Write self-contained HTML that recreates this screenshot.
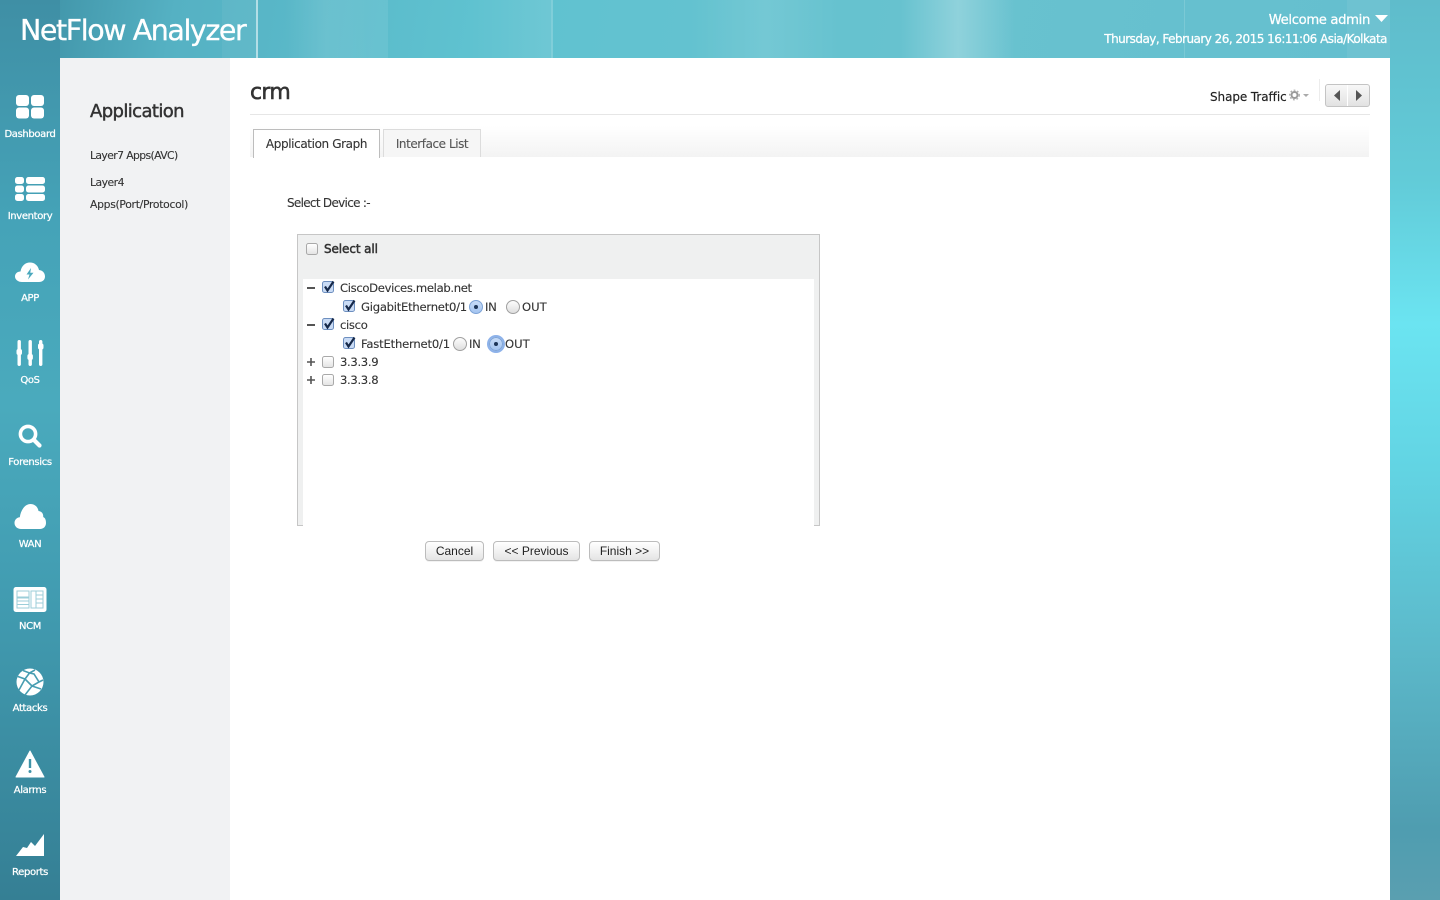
<!DOCTYPE html>
<html><head><meta charset="utf-8"><title>NetFlow Analyzer</title>
<style>
html,body{margin:0;padding:0;width:1440px;height:900px;overflow:hidden}
body{position:relative;font-family:"DejaVu Sans","Liberation Sans",sans-serif;color:#333;background:#4fa9bb}
.a{position:absolute;white-space:nowrap}
#bg{position:absolute;inset:0;background:linear-gradient(100deg,#3a8ba0 0,#55b1c3 11%,#5fc2d0 30%,#68c2cf 60%,#65bfcf 85%,#62bccd 100%)}
#bgb{position:absolute;left:0;top:0;width:60px;height:900px;background:linear-gradient(180deg,#3f8fa5 0,#45a3b8 25%,#4aaabd 45%,#429db2 65%,#357f94 100%)}
#bgr{position:absolute;left:1390px;top:0;width:50px;height:900px;background:linear-gradient(180deg,#5fbccb 0,#62cbd8 20%,#6be4f1 36%,#62d4e3 52%,#5cb9ca 72%,#4f9db0 92%,#5a9fb0 100%)}
.st{position:absolute;top:0;height:58px}
.nav{position:absolute;left:0;width:60px;text-align:center;color:#fff;font-size:10px;letter-spacing:-.35px;font-weight:400;-webkit-text-stroke:.25px #fff}
.nav svg{position:absolute;left:10px;top:0}
.nav span{position:absolute;left:0;width:60px;top:37px;line-height:12px}
.t{font-size:11.6px;letter-spacing:-.33px;color:#333;line-height:14px;-webkit-text-stroke:.12px #333}
.cb{position:absolute;width:10px;height:10px;border:1px solid #a9a9a9;border-radius:2.5px;background:linear-gradient(#fff,#e4e4e4)}
.ck{position:absolute;width:13px;height:13px}
.ck svg{position:absolute;left:0;top:0;overflow:visible}
.r{position:absolute;width:14px;height:14px;border:1px solid #a0a0a0;border-radius:50%;background:linear-gradient(#fdfdfd,#dedede);box-sizing:border-box}
.ron{background:linear-gradient(#c8dcf7,#a3c4f0);border-color:#7da3d6}
.ron:after{content:"";position:absolute;left:4px;top:4px;width:4px;height:4px;border-radius:50%;background:#1d3557}
.btn{position:absolute;top:541px;height:20px;box-sizing:border-box;border:1px solid #bcbcbc;border-radius:4px;background:linear-gradient(#fff,#f2f2f2 50%,#e4e4e4);font:12px/18px "Liberation Sans",sans-serif;color:#222;text-align:center;box-shadow:0 1px 0 rgba(0,0,0,.05)}
</style></head><body>
<div id="bg"></div><div id="bgb"></div><div id="bgr"></div>
<div class="st" style="left:222px;width:34px;background:rgba(255,255,255,.05)"></div>
<div class="st" style="left:256px;width:2px;background:rgba(255,255,255,.55)"></div>
<div class="st" style="left:285px;width:103px;background:linear-gradient(90deg,rgba(255,255,255,0),rgba(255,255,255,.1) 40%,rgba(255,255,255,.07))"></div>
<div class="st" style="left:470px;width:81px;background:linear-gradient(90deg,rgba(255,255,255,0),rgba(255,255,255,.09))"></div>
<div class="st" style="left:551px;width:2px;background:rgba(255,255,255,.2)"></div>
<div class="st" style="left:690px;width:150px;background:linear-gradient(90deg,rgba(255,255,255,0),rgba(255,255,255,.1),rgba(255,255,255,0))"></div>
<div class="st" style="left:900px;width:116px;background:linear-gradient(90deg,rgba(255,255,255,0),rgba(255,255,255,.26),rgba(255,255,255,0))"></div>
<div class="st" style="left:1184px;width:1px;background:rgba(255,255,255,.14)"></div>
<div class="st" style="left:1347px;width:43px;background:rgba(255,255,255,.06)"></div>

<div class="a" style="left:20px;top:11px;font:28.5px/40px 'DejaVu Sans',sans-serif;letter-spacing:-1.43px;color:#fff;-webkit-text-stroke:.3px #fff">NetFlow Analyzer</div>
<div class="a" style="right:70px;top:12px;font-size:13.2px;line-height:17px;letter-spacing:-.35px;color:#fff;-webkit-text-stroke:.25px #fff">Welcome admin</div>
<svg class="a" style="left:1375px;top:15px" width="13" height="8"><path d="M0 0H13L6.500 7Z" fill="#fff"/></svg>
<div class="a" style="right:53px;top:31px;font-size:12px;line-height:16px;letter-spacing:-.53px;color:#fff;-webkit-text-stroke:.25px #fff">Thursday, February 26, 2015 16:11:06 Asia/Kolkata</div>

<!-- panels -->
<div class="a" style="left:60px;top:58px;width:170px;height:842px;background:#f1f2f3"></div>
<div class="a" style="left:230px;top:58px;width:1160px;height:842px;background:#fff"></div>

<!-- nav -->
<div class="nav" style="top:92px;height:50px"><svg width="40" height="30" fill="#fff"><rect x="6" y="3" width="13" height="11" rx="3"/><rect x="21" y="3" width="13" height="11" rx="3"/><rect x="6" y="15.500" width="13" height="11" rx="3"/><rect x="21" y="15.500" width="13" height="11" rx="3"/></svg><span>Dashboard</span></div>
<div class="nav" style="top:174px;height:50px"><svg width="40" height="30" fill="#fff"><rect x="5" y="3" width="9" height="7" rx="2.500"/><rect x="16" y="3" width="19" height="7" rx="2.500"/><rect x="5" y="11.500" width="9" height="7" rx="2.500"/><rect x="16" y="11.500" width="19" height="7" rx="2.500"/><rect x="5" y="20" width="9" height="7" rx="2.500"/><rect x="16" y="20" width="19" height="7" rx="2.500"/></svg><span>Inventory</span></div>
<div class="nav" style="top:255px;height:50px"><svg width="40" height="30"><path d="M12 27C8 27 5 24.500 5 21.500C5 18.500 7.500 16.500 10.500 16.500C11.500 11 15 7.500 20 7.500C24.500 7.500 28 10.500 29 15C32.500 15.200 35 18 35 21.500C35 24.800 32.500 27 29 27Z" fill="#fff"/><path d="M21 13L16.500 19.500H19.500L18 24.500L23.500 17.800H20.300Z" fill="#4aa8bd"/></svg><span style="top:38px">APP</span></div>
<div class="nav" style="top:338px;height:50px"><svg width="40" height="30" fill="#fff"><rect x="7.500" y="2" width="3.400" height="26" rx="1.700"/><rect x="18.500" y="2" width="3.400" height="26" rx="1.700"/><rect x="29" y="2" width="3.400" height="26" rx="1.700"/><rect x="6.500" y="11" width="5.500" height="6" rx="2"/><rect x="17.400" y="16" width="5.500" height="6" rx="2"/><rect x="28" y="5.500" width="5.500" height="6" rx="2"/></svg><span>QoS</span></div>
<div class="nav" style="top:420px;height:50px"><svg width="40" height="30"><circle cx="18" cy="14" r="7.600" fill="none" stroke="#fff" stroke-width="3.600"/><path d="M24 20L29.500 25.500" stroke="#fff" stroke-width="4.200" stroke-linecap="round"/></svg><span>Forensics</span></div>
<div class="nav" style="top:501px;height:50px"><svg width="40" height="30"><path d="M11 28C7.500 28 4.500 25.500 4.500 22C4.500 18.800 7 16.500 9.800 16.300C10.500 10 14.500 3 20.500 3C25 3 28 6.300 28.500 10C32 10.500 33.500 13 33.200 16C35.500 17 36 19.500 36 22C36 25.500 33.500 28 30 28Z" fill="#fff"/></svg><span style="top:38px">WAN</span></div>
<div class="nav" style="top:584px;height:50px"><svg width="40" height="30"><rect x="3.500" y="3" width="33" height="25" rx="2.500" fill="#fff"/><g fill="none" stroke="#9cced9" stroke-width="1"><rect x="7" y="7" width="12" height="6"/><rect x="7" y="14" width="12" height="10"/><rect x="21" y="7" width="5" height="17"/><rect x="26" y="7" width="7" height="17"/><path d="M26 11H33M26 15H33M26 19H33M7 17H19M7 20.500H19"/></g></svg><span>NCM</span></div>
<div class="nav" style="top:666px;height:50px"><svg width="40" height="30"><circle cx="20" cy="16" r="13.500" fill="#fff"/><g stroke="#479db1" stroke-width="1.600" fill="none"><path d="M13 4.500L19.500 7L25 4M19.500 7L15 13L6.500 10M15 13L22 20L15 29M22 20L29 16L24 8L19.500 7M29 16L33 14M22 20L31 23M15 13L9 24"/></g></svg><span>Attacks</span></div>
<div class="nav" style="top:748px;height:50px"><svg width="40" height="30"><path d="M20 3L34 29H6Z" fill="#fff" stroke="#fff" stroke-linejoin="round"/><rect x="18.800" y="11" width="2.400" height="9" fill="#3f93a8"/><circle cx="20" cy="23.500" r="1.500" fill="#3f93a8"/></svg><span>Alarms</span></div>
<div class="nav" style="top:830px;height:50px"><svg width="40" height="30"><path d="M6 26L13 17L17 18L21 12L25 16L34 4V26Z" fill="#fff"/></svg><span>Reports</span></div>

<!-- sidebar -->
<div class="a" style="left:90px;top:100px;font-size:18px;line-height:24px;letter-spacing:-.6px;color:#333;-webkit-text-stroke:.45px #333">Application</div>
<div class="a t" style="left:90px;top:149px;font-size:10.800px;letter-spacing:-.6px">Layer7 Apps(AVC)</div>
<div class="a t" style="left:90px;top:176px;font-size:10.800px;letter-spacing:-.5px">Layer4</div>
<div class="a t" style="left:90px;top:198px;font-size:10.800px;letter-spacing:-.3px">Apps(Port/Protocol)</div>

<!-- heading -->
<div class="a" style="left:250px;top:79px;font-size:22px;line-height:28px;letter-spacing:-.7px;color:#333;-webkit-text-stroke:.55px #333">crm</div>
<div class="a" style="left:250px;top:114px;width:1120px;height:1px;background:#e6e6e6"></div>
<div class="a" style="left:1210px;top:89px;font-size:12px;line-height:16px;letter-spacing:-.08px;color:#222;-webkit-text-stroke:.15px #222">Shape Traffic</div>
<svg class="a" style="left:1289px;top:89px" width="22" height="13"><circle cx="5.500" cy="6" r="3" fill="none" stroke="#9a9a9a" stroke-width="2"/><circle cx="5.500" cy="6" r="4.800" fill="none" stroke="#aaa" stroke-width="1.200" stroke-dasharray="1.800 1.800"/><path d="M14 5H20L17 8Z" fill="#aaa"/></svg>
<div class="a" style="left:1319px;top:79px;width:1px;height:22px;background:#ececec"></div>
<div class="a" style="left:1325px;top:84px;width:45px;height:23px;box-sizing:border-box;border:1px solid #c4c4c4;border-radius:3px;background:linear-gradient(#f8f8f8,#e2e2e2)"></div>
<div class="a" style="left:1347px;top:85px;width:1px;height:21px;background:#fff"></div>
<svg class="a" style="left:1330px;top:88px" width="36" height="15"><path d="M10 2V13L4 7.500Z" fill="#555"/><path d="M26 2V13L32 7.500Z" fill="#555"/></svg>

<!-- tabs -->
<div class="a" style="left:250px;top:126px;width:1119px;height:31px;background:linear-gradient(#fff,#f3f3f3)"></div>
<div class="a" style="left:253px;top:129px;width:127px;height:29px;box-sizing:border-box;border:1px solid #bdbdbd;border-bottom:0;background:#fff;font-size:12px;line-height:29px;letter-spacing:-.38px;text-align:center;color:#333;-webkit-text-stroke:.12px #333">Application Graph</div>
<div class="a" style="left:383px;top:129px;width:98px;height:28px;box-sizing:border-box;border:1px solid #dcdcdc;border-bottom:0;background:#f6f6f6;font-size:12px;line-height:29px;letter-spacing:-.44px;text-align:center;color:#555;-webkit-text-stroke:.12px #555">Interface List</div>

<div class="a t" style="left:287px;top:196px;font-size:12px;letter-spacing:-.7px">Select Device :-</div>

<!-- box -->
<div class="a" style="left:297px;top:234px;width:523px;height:292px;box-sizing:border-box;border:1px solid #c6c6c6;border-bottom:0;background:#eff0f0"></div>
<div class="a" style="left:297px;top:525px;width:6px;height:1px;background:#c6c6c6"></div>
<div class="a" style="left:814px;top:525px;width:6px;height:1px;background:#c6c6c6"></div>
<div class="a" style="left:303px;top:279px;width:511px;height:247px;background:#fff"></div>

<div class="cb" style="left:306px;top:243px"></div>
<div class="a t" style="left:324px;top:242px;font-size:12px;letter-spacing:-.1px;-webkit-text-stroke:.5px #333">Select all</div>

<div class="a" style="left:307px;top:287px;width:8px;height:2px;background:#555"></div>
<div class="ck" style="left:322px;top:281px"><svg width="13" height="13"><rect x=".5" y=".5" width="11" height="11" rx="2" fill="#c9dbf5" stroke="#6d8fbf"/><path d="M3 5.500L5.500 9.500L11.500 .5" fill="none" stroke="#16294a" stroke-width="2.200"/></svg></div>
<div class="a t" style="left:340px;top:281px">CiscoDevices.melab.net</div>
<div class="ck" style="left:343px;top:300px"><svg width="13" height="13"><rect x=".5" y=".5" width="11" height="11" rx="2" fill="#c9dbf5" stroke="#6d8fbf"/><path d="M3 5.500L5.500 9.500L11.500 .5" fill="none" stroke="#16294a" stroke-width="2.200"/></svg></div>
<div class="a t" style="left:361px;top:300px;letter-spacing:-.25px">GigabitEthernet0/1</div>
<div class="r ron" style="left:469px;top:300px"></div>
<div class="a t" style="left:485px;top:300px">IN</div>
<div class="r" style="left:506px;top:300px"></div>
<div class="a t" style="left:522px;top:300px;letter-spacing:0">OUT</div>

<div class="a" style="left:307px;top:324px;width:8px;height:2px;background:#555"></div>
<div class="ck" style="left:322px;top:318px"><svg width="13" height="13"><rect x=".5" y=".5" width="11" height="11" rx="2" fill="#c9dbf5" stroke="#6d8fbf"/><path d="M3 5.500L5.500 9.500L11.500 .5" fill="none" stroke="#16294a" stroke-width="2.200"/></svg></div>
<div class="a t" style="left:340px;top:318px">cisco</div>
<div class="ck" style="left:343px;top:337px"><svg width="13" height="13"><rect x=".5" y=".5" width="11" height="11" rx="2" fill="#c9dbf5" stroke="#6d8fbf"/><path d="M3 5.500L5.500 9.500L11.500 .5" fill="none" stroke="#16294a" stroke-width="2.200"/></svg></div>
<div class="a t" style="left:361px;top:337px;letter-spacing:-.2px">FastEthernet0/1</div>
<div class="r" style="left:453px;top:337px"></div>
<div class="a t" style="left:469px;top:337px">IN</div>
<div class="r ron" style="left:489px;top:337px;box-shadow:0 0 0 2px #8db2ea"></div>
<div class="a t" style="left:505px;top:337px;letter-spacing:0">OUT</div>

<svg class="a" style="left:307px;top:358px" width="8" height="8"><path d="M0 4H8M4 0V8" stroke="#555" stroke-width="1.600"/></svg>
<div class="cb" style="left:322px;top:356px"></div>
<div class="a t" style="left:340px;top:355px">3.3.3.9</div>
<svg class="a" style="left:307px;top:376px" width="8" height="8"><path d="M0 4H8M4 0V8" stroke="#555" stroke-width="1.600"/></svg>
<div class="cb" style="left:322px;top:374px"></div>
<div class="a t" style="left:340px;top:373px">3.3.3.8</div>

<div class="btn" style="left:425px;width:59px">Cancel</div>
<div class="btn" style="left:493px;width:87px">&lt;&lt; Previous</div>
<div class="btn" style="left:589px;width:71px">Finish &gt;&gt;</div>
</body></html>
